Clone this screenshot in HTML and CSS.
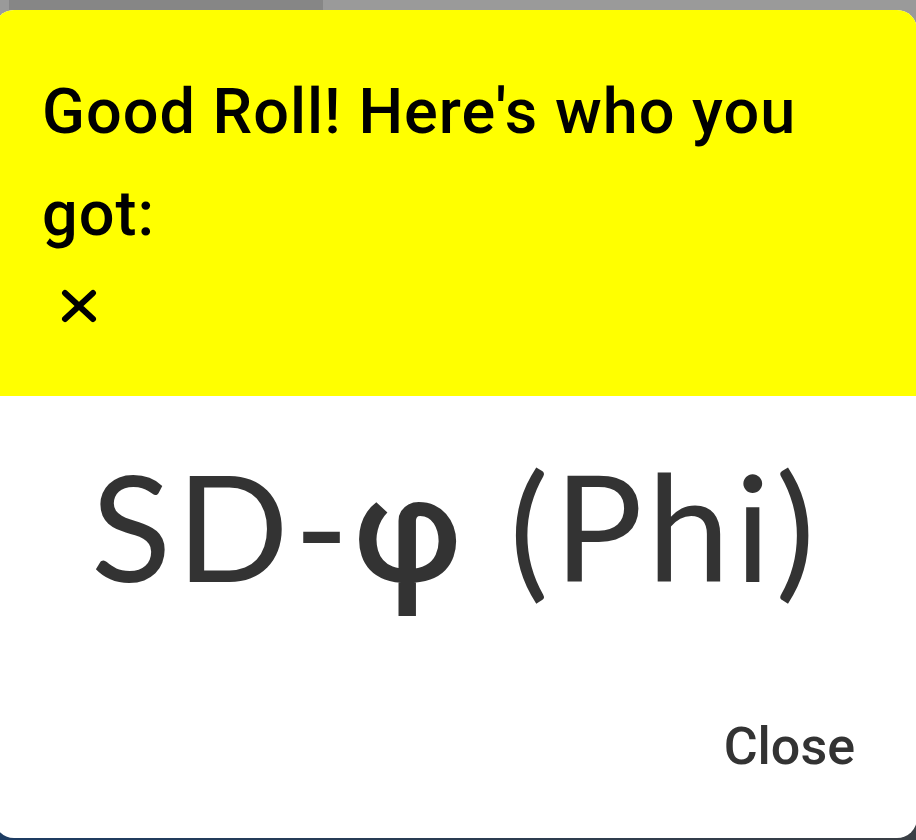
FILE: index.html
```html
<!DOCTYPE html>
<html lang="en">
<head>
<meta charset="utf-8">
<title>Good Roll</title>
<link rel="stylesheet" href="styles.css">
</head>
<body>
<div class="backdrop">
  <div class="strip"><div class="strip-tab"></div></div>
  <div class="dialog">
    <div class="dialog-header">
      <h2 class="dialog-title">Good Roll! Here's who you got:</h2>
      <button class="dismiss" aria-label="Dismiss">
        <svg width="36" height="34" viewBox="0 0 36 34"><path d="M4 4 L32 30 M32 4 L4 30" stroke="#000" stroke-width="6" stroke-linecap="round" fill="none"/></svg>
      </button>
    </div>
    <div class="dialog-body">
      <div class="result">SD-<span class="greek">φ</span> (Phi)</div>
      <div class="actions"><button class="close-btn">Close</button></div>
    </div>
  </div>
</div>
</body>
</html>
```
FILE: styles.css
```css
html, body {
  margin: 0;
  padding: 0;
  width: 916px;
  height: 840px;
  overflow: hidden;
}
body {
  background:
    linear-gradient(to bottom, #9a9a9a 0, #9a9a9a 40px, transparent 40px),
    linear-gradient(to right, #1d3c63 0, #2a3c52 50%, #3a3f45 100%);
  font-family: Roboto, "Liberation Sans", sans-serif;
}
.backdrop {
  display: flex;
  flex-direction: column;
}
.strip {
  height: 10px;
  display: flex;
}
.strip-tab {
  margin-left: 9px;
  width: 314px;
  background: #868686;
}
.dialog {
  margin-left: -6px;
  width: 923px;
  height: 828px;
  border-radius: 20px;
  overflow: hidden;
  background: #fff;
  display: flex;
  flex-direction: column;
}
.dialog-header {
  background: #ffff00;
  height: 386px;
  box-sizing: border-box;
  padding: 51px 46px 0 48px;
}
.dialog-title {
  margin: 0;
  font-family: Roboto, "Liberation Sans", sans-serif;
  font-weight: 500;
  font-size: 63px;
  line-height: 102px;
  letter-spacing: 1px;
  color: #000;
}
.dismiss {
  display: block;
  margin: 24px 0 0 19px;
  padding: 0;
  border: 0;
  background: transparent;
  width: 36px;
  height: 34px;
}
.dismiss svg { display: block; }
.dialog-body {
  flex: 1;
  display: flex;
  flex-direction: column;
  padding-top: 34px;
}
.result {
  height: 190px;
  font-family: Lato, "Open Sans", sans-serif;
  font-weight: 400;
  font-size: 148px;
  line-height: 190px;
  letter-spacing: 5px;
  color: #333;
  text-align: center;
  overflow: visible;
}
.greek {
  font-family: Roboto, "DejaVu Sans", sans-serif;
  font-weight: 500;
  line-height: 1;
}
.actions {
  display: flex;
  justify-content: flex-end;
  padding-right: 62px;
  margin-top: 97px;
}
.close-btn {
  padding: 0;
  border: 0;
  background: transparent;
  font-family: Roboto, "Liberation Sans", sans-serif;
  font-weight: 500;
  font-size: 52px;
  line-height: 60px;
  color: #333;
}
```
